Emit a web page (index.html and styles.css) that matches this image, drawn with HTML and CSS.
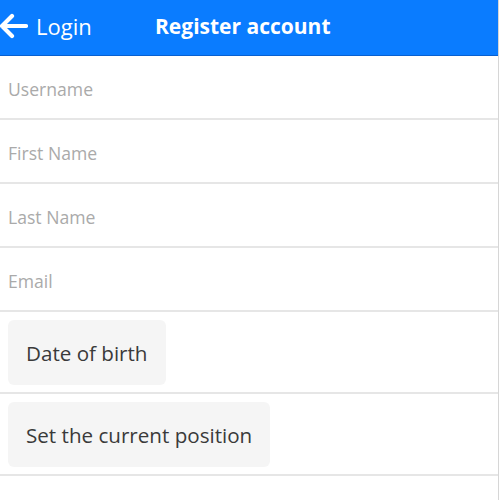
FILE: index.html
```html
<!DOCTYPE html>
<html>
<head>
<meta charset="utf-8">
<link rel="stylesheet" href="styles.css">
</head>
<body>
<div class="app">
  <header class="topbar">
    <a class="back">
      <svg class="arrow" width="29" height="26" viewBox="0 0 29 26"><path d="M27 13H3M13 3L3 13L13 23" fill="none" stroke="#fff" stroke-width="4.2" stroke-linecap="round" stroke-linejoin="round"/></svg>
      <span>Login</span>
    </a>
    <h1 class="title">Register account</h1>
  </header>
  <div class="form">
    <div class="field"><input class="input" placeholder="Username"></div>
    <div class="field"><input class="input" placeholder="First Name"></div>
    <div class="field"><input class="input" placeholder="Last Name"></div>
    <div class="field"><input class="input" placeholder="Email"></div>
    <div class="field btnrow"><button class="btn">Date of birth</button></div>
    <div class="field btnrow"><button class="btn">Set the current position</button></div>
  </div>
</div>
</body>
</html>
```
FILE: styles.css
```css
html, body { margin: 0; padding: 0; background: #fff; }
body { font-family: "Open Sans", "Noto Sans", sans-serif; }
.app { width: 498px; border-right: 1px solid #d6d6d6; min-height: 500px; }
.topbar {
  height: 52px;
  padding-bottom: 3px;
  background: #0a7cff;
  border-bottom: 1px solid #0860d0;
  display: flex;
  align-items: center;
  color: #fff;
}
.back { display: flex; align-items: center; gap: 8px; margin-left: -1px; color: #fff; font-size: 22px; width: 156px; }
.arrow { display: block; }
.title { margin: 0; font-size: 21px; font-weight: 700; }
.form { display: flex; flex-direction: column; }
.field { border-bottom: 2px solid #e6e6e6; height: 62px; display: flex; align-items: center; }
.input {
  border: none; outline: none; width: 100%; padding: 3px 8px 0;
  font-family: inherit; font-size: 17.6px; color: #333; background: transparent;
}
.input::placeholder { color: #aaaaaa; }
.btnrow { height: auto; padding: 8px 0 7px 8px; }
.btn {
  background: #f5f5f5; border: none; border-radius: 6px;
  font-family: inherit; font-size: 20.6px; color: #3a3a3a;
  height: 65px; padding: 0 18px;
}
```
